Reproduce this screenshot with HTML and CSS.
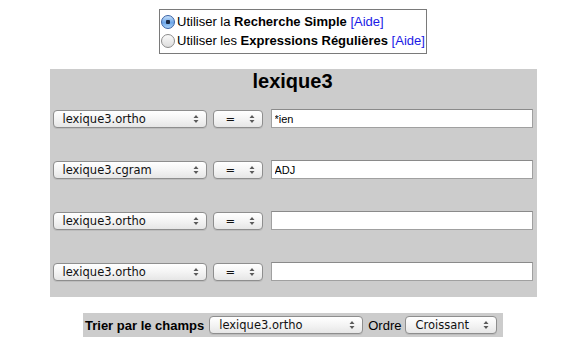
FILE: index.html
```html
<!DOCTYPE html>
<html lang="fr">
<head>
<meta charset="UTF-8">
<title>Lexique3 - recherche</title>
<link rel="stylesheet" href="styles.css">
</head>
<body>

<div class="page">
    <div class="mode">
        <label><input type="radio" name="mode" checked>Utiliser la <b>Recherche Simple</b> <a href="#">[Aide]</a></label>
        <label><input type="radio" name="mode">Utiliser les <b>Expressions Régulières</b> <a href="#">[Aide]</a></label>
    </div>

    <div class="panel">
        <h2>lexique3</h2>
        <div class="rows">
            <div class="row">
                <span class="sel wide">lexique3.ortho<svg viewBox="0 0 6 10"><path d="M3 1 L5.5 4 H0.5 Z M3 9 L5.5 6 H0.5 Z"/></svg></span>
                <span class="sel op">=<svg viewBox="0 0 6 10"><path d="M3 1 L5.5 4 H0.5 Z M3 9 L5.5 6 H0.5 Z"/></svg></span>
                <input type="text" value="*ien">
            </div>
            <div class="row">
                <span class="sel wide">lexique3.cgram<svg viewBox="0 0 6 10"><path d="M3 1 L5.5 4 H0.5 Z M3 9 L5.5 6 H0.5 Z"/></svg></span>
                <span class="sel op">=<svg viewBox="0 0 6 10"><path d="M3 1 L5.5 4 H0.5 Z M3 9 L5.5 6 H0.5 Z"/></svg></span>
                <input type="text" value="ADJ">
            </div>
            <div class="row">
                <span class="sel wide">lexique3.ortho<svg viewBox="0 0 6 10"><path d="M3 1 L5.5 4 H0.5 Z M3 9 L5.5 6 H0.5 Z"/></svg></span>
                <span class="sel op">=<svg viewBox="0 0 6 10"><path d="M3 1 L5.5 4 H0.5 Z M3 9 L5.5 6 H0.5 Z"/></svg></span>
                <input type="text" value="">
            </div>
            <div class="row">
                <span class="sel wide">lexique3.ortho<svg viewBox="0 0 6 10"><path d="M3 1 L5.5 4 H0.5 Z M3 9 L5.5 6 H0.5 Z"/></svg></span>
                <span class="sel op">=<svg viewBox="0 0 6 10"><path d="M3 1 L5.5 4 H0.5 Z M3 9 L5.5 6 H0.5 Z"/></svg></span>
                <input type="text" value="">
            </div>
        </div>
    </div>

    <div class="sort">
        <b>Trier par le champs</b>
        <span class="sel wide">lexique3.ortho<svg viewBox="0 0 6 10"><path d="M3 1 L5.5 4 H0.5 Z M3 9 L5.5 6 H0.5 Z"/></svg></span>
        <span class="label">Ordre</span>
        <span class="sel order">Croissant<svg viewBox="0 0 6 10"><path d="M3 1 L5.5 4 H0.5 Z M3 9 L5.5 6 H0.5 Z"/></svg></span>
    </div>
</div>

</body>
</html>
```

FILE: styles.css
```css
body {
    margin: 0;
    font-family: "Liberation Sans", Arial, sans-serif;
    font-size: 13px;
    color: #000;
    background: #fff;
}
.page {
    width: 570px;
    padding-left: 16px;
    box-sizing: border-box;
    display: flex;
    flex-direction: column;
    align-items: center;
}
.mode {
    margin-top: 9px;
    border: 1px solid #7a7a7a;
    padding: 2px 2px 3px 1px;
    width: 268px;
    box-sizing: border-box;
}
.mode label {
    display: block;
    height: 19px;
    line-height: 19px;
    white-space: nowrap;
}
.mode a {
    color: #1a1ae6;
    text-decoration: none;
}
.mode input {
    appearance: none;
    -webkit-appearance: none;
    width: 14px;
    height: 14px;
    margin: 0 2px 0 0;
    vertical-align: -3px;
    border: 1px solid #8c8c8c;
    border-radius: 50%;
    background: linear-gradient(#fafafa, #dcdcdc);
    box-sizing: border-box;
}
.mode input:checked {
    border-color: #3a62a4;
    background: radial-gradient(circle at 50% 50%, #1b2a44 0, #1b2a44 2px, transparent 2.5px),
                linear-gradient(#c6e0fb, #6da6e8 55%, #a9d2f8);
}
.panel {
    margin-top: 15px;
    width: 487px;
    height: 228px;
    background: #cccccc;
    box-sizing: border-box;
    padding: 0 4px 0 3px;
}
.panel h2 {
    margin: 0;
    padding-top: 1px;
    font-size: 20px;
    line-height: 23px;
    text-align: center;
}
.rows {
    margin-top: 16px;
    display: flex;
    flex-direction: column;
    gap: 32px;
}
.row {
    display: flex;
    align-items: center;
    height: 19px;
}
.sel {
    display: inline-flex;
    align-items: center;
    justify-content: space-between;
    flex-shrink: 0;
    height: 18px;
    box-sizing: border-box;
    border: 1px solid #8e8e8e;
    border-radius: 4px;
    background: linear-gradient(#ffffff, #f4f4f4 50%, #e6e6e6);
    box-shadow: 0 1px 0 rgba(0, 0, 0, 0.08);
    padding: 0 7px 0 9px;
    font-family: "DejaVu Sans", sans-serif;
    font-size: 11.5px;
    color: #111;
}
.sel svg {
    width: 6px;
    height: 10px;
    fill: #5a5a5a;
}
.sel.wide {
    width: 154px;
}
.sel.op {
    width: 50px;
    margin-left: 6px;
    padding-left: 12px;
}
.sel.order {
    width: 92px;
}
.row input {
    margin-left: 8px;
    width: 262px;
    height: 19px;
    box-sizing: border-box;
    border: 1px solid #a0a0a0;
    border-top-color: #8a8a8a;
    background: #fff;
    padding: 0 3px;
    font-family: "Liberation Sans", Arial, sans-serif;
    font-size: 11px;
    outline: none;
}
.sort {
    margin-top: 16px;
    width: 420px;
    height: 24px;
    background: #cccccc;
    display: flex;
    align-items: center;
    padding-left: 2px;
    box-sizing: border-box;
    font-size: 13px;
    white-space: nowrap;
}
.sort .wide {
    margin-left: 5px;
}
.sort .label {
    margin-left: 5px;
}
.sort .order {
    margin-left: 4px;
}
```
